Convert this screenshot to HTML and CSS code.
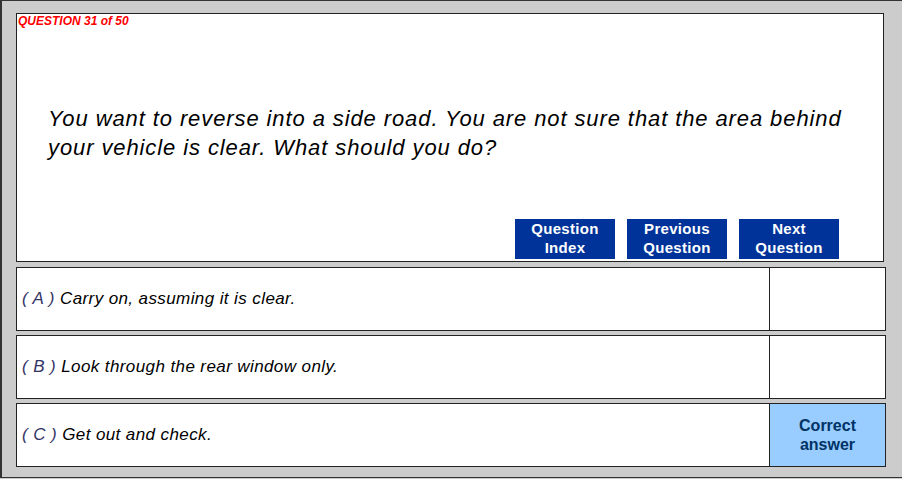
FILE: index.html
```html
<!DOCTYPE html>
<html lang="en">
<head>
    <meta charset="UTF-8">
    <title>Theory Test - Question 31</title>
    <link rel="stylesheet" href="styles.css">
</head>
<body>
    <div class="frame">
        <div class="question-box">
            <div class="counter">QUESTION 31 of 50</div>
            <div class="question-text">You want to reverse into a side road. You are not sure that the area behind your vehicle is clear. What should you do?</div>
            <div class="nav">
                <button class="nav-btn">Question<br>Index</button>
                <button class="nav-btn">Previous<br>Question</button>
                <button class="nav-btn">Next<br>Question</button>
            </div>
        </div>

        <div class="answer">
            <div class="answer-text"><span class="letter">( A )</span> Carry on, assuming it is clear.</div>
            <div class="answer-mark"></div>
        </div>
        <div class="answer">
            <div class="answer-text"><span class="letter">( B )</span> Look through the rear window only.</div>
            <div class="answer-mark"></div>
        </div>
        <div class="answer">
            <div class="answer-text"><span class="letter">( C )</span> Get out and check.</div>
            <div class="answer-mark correct">Correct<br>answer</div>
        </div>
    </div>
</body>
</html>
```

FILE: styles.css
```css
body {
    margin: 0;
    background-color: #cccccc;
    font-family: "Liberation Sans", Arial, sans-serif;
}

.frame {
    height: 464px;
    border-top: 1px solid #333;
    border-left: 2px solid #333;
    border-bottom: 1px solid #333;
    padding: 12px 0 0 14px;
    display: flex;
    flex-direction: column;
    gap: 4px;
}

.question-box {
    width: 868px;
    height: 249px;
    box-sizing: border-box;
    background-color: #fff;
    border: 1px solid #222;
    display: flex;
    flex-direction: column;
    margin-bottom: 1px;
}

.counter {
    color: #ff0000;
    font-size: 12px;
    font-weight: bold;
    font-style: italic;
    padding: 1px 0 0 1px;
    line-height: 13px;
}

.question-text {
    flex: 1;
    font-size: 22px;
    font-style: italic;
    letter-spacing: 0.9px;
    line-height: 29px;
    color: #000;
    padding: 76px 30px 0 31px;
}

.nav {
    display: flex;
    justify-content: flex-end;
    gap: 12px;
    padding: 0 44px 2px 0;
}

.nav-btn {
    width: 100px;
    height: 40px;
    border: none;
    background-color: #003399;
    color: #fff;
    font-family: "Liberation Sans", Arial, sans-serif;
    font-size: 15px;
    font-weight: bold;
    letter-spacing: 0.3px;
    line-height: 19px;
    padding: 0 0 3px;
}

.answer {
    width: 870px;
    height: 64px;
    box-sizing: border-box;
    background-color: #fff;
    border: 1px solid #222;
    display: flex;
}

.answer-text {
    flex: 1;
    display: flex;
    align-items: center;
    padding-left: 5px;
    font-size: 17px;
    font-style: italic;
    letter-spacing: 0.4px;
    color: #000;
    white-space: pre;
}

.letter {
    color: #333366;
}

.answer-mark {
    width: 116px;
    box-sizing: border-box;
    border-left: 1px solid #222;
}

.correct {
    background-color: #99ccff;
    color: #003366;
    font-size: 16px;
    font-weight: bold;
    line-height: 19px;
    display: flex;
    align-items: center;
    justify-content: center;
    text-align: center;
}
```
